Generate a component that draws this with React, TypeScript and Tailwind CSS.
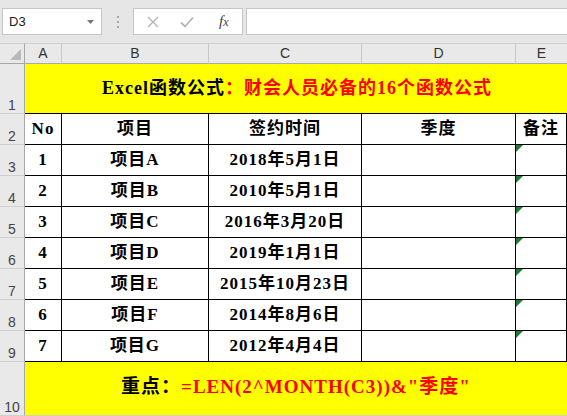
import React from 'react';

const serif = "font-['Liberation_Serif','Noto_Sans_CJK_SC',serif]";

const rows = [
  { no: '1', item: '项目A', date: '2018年5月1日' },
  { no: '2', item: '项目B', date: '2010年5月1日' },
  { no: '3', item: '项目C', date: '2016年3月20日' },
  { no: '4', item: '项目D', date: '2019年1月1日' },
  { no: '5', item: '项目E', date: '2015年10月23日' },
  { no: '6', item: '项目F', date: '2014年8月6日' },
  { no: '7', item: '项目G', date: '2012年4月4日' },
];

const RowHead: React.FC<{ n: string }> = ({ n }) => (
  <div className="flex items-end justify-center pb-[1px] bg-[#e9e9e9] border-r border-r-[#a8a8a8] border-b border-b-[#cfcfcf] text-[14px] leading-none text-[#444] font-['Liberation_Sans',sans-serif]">
    {n}
  </div>
);

const Cell: React.FC<{ children?: React.ReactNode; tri?: boolean }> = ({ children, tri }) => (
  <div className={`relative flex items-center justify-center border-r border-b border-black text-[17px] font-bold tracking-[1px] text-black whitespace-nowrap ${serif}`}>
    {tri && (
      <svg className="absolute left-0 top-0" width="7" height="7" viewBox="0 0 7 7">
        <polygon points="0,0 7,0 0,7" fill="#1e7a34" />
      </svg>
    )}
    {children}
  </div>
);

export default function App() {
  return (
    <div className="w-[567px] h-[416px] overflow-hidden bg-white">
      {/* formula bar */}
      <div className="flex items-start h-[43px] bg-[#e6e6e6] pt-[8px] pl-[2px]">
        <div className="relative flex items-center w-[100px] h-[27px] bg-white border border-[#c6c6c6] pl-[6px] text-[13px] text-[#222] font-['Liberation_Sans',sans-serif]">
          D3
          <svg className="absolute right-[7px] top-[11px]" width="7" height="4" viewBox="0 0 7 4">
            <polygon points="0,0 7,0 3.5,4" fill="#777" />
          </svg>
        </div>
        <div className="flex flex-col items-center justify-center gap-[3px] w-[31px] h-[27px]">
          <span className="w-[2px] h-[2px] bg-[#a8a8a8]" />
          <span className="w-[2px] h-[2px] bg-[#a8a8a8]" />
          <span className="w-[2px] h-[2px] bg-[#a8a8a8]" />
        </div>
        <div className="flex items-center w-[110px] h-[27px] bg-white border border-[#c6c6c6]">
          <svg className="ml-[13px]" width="12" height="12" viewBox="0 0 12 12">
            <path d="M1 1 L11 11 M11 1 L1 11" stroke="#b4b4b4" strokeWidth="1.4" fill="none" />
          </svg>
          <svg className="ml-[21px]" width="14" height="12" viewBox="0 0 14 12">
            <path d="M1 6.5 L5 10.5 L13 1.5" stroke="#b4b4b4" strokeWidth="1.8" fill="none" />
          </svg>
          <span className="ml-[25px] text-[15px] italic text-[#444] font-['Liberation_Serif',serif]">
            f<span className="text-[12px]">x</span>
          </span>
        </div>
        <div className="flex-1 h-[27px] ml-[3px] bg-white border border-[#c6c6c6] border-r-0" />
      </div>

      {/* sheet grid */}
      <div className="grid grid-cols-[25px_37px_147px_153px_154px_51px] grid-rows-[21px_50px_repeat(8,31px)_54px]">
        {/* column headers */}
        <div className="relative bg-[#e9e9e9] border-t border-t-[#d0d0d0] border-r border-r-[#a8a8a8] border-b border-b-[#a8a8a8]">
          <svg className="absolute right-[3px] bottom-[3px]" width="11" height="11" viewBox="0 0 11 11">
            <polygon points="11,0 11,11 0,11" fill="#b8b8b8" />
          </svg>
        </div>
        {['A', 'B', 'C', 'D', 'E'].map((c, i) => (
          <div
            key={c}
            className={`flex items-center justify-center bg-[#e9e9e9] border-t border-t-[#d0d0d0] border-b border-b-[#a8a8a8] ${i < 4 ? 'border-r border-r-[#c8c8c8]' : ''} text-[14px] text-[#333] font-['Liberation_Sans',sans-serif]`}
          >
            {c}
          </div>
        ))}

        {/* row 1 */}
        <RowHead n="1" />
        <div className={`col-span-5 flex items-center justify-center bg-[#ffff00] border-b border-black text-[18px] font-bold tracking-[1px] whitespace-nowrap pl-[2px] ${serif}`}>
          <span className="text-black">Excel函数公式</span>
          <span className="text-[#ff0000]">：财会人员必备的16个函数公式</span>
        </div>

        {/* row 2 */}
        <RowHead n="2" />
        <Cell>No</Cell>
        <Cell>项目</Cell>
        <Cell>签约时间</Cell>
        <Cell>季度</Cell>
        <Cell>备注</Cell>

        {rows.map((r, i) => (
          <React.Fragment key={r.no}>
            <RowHead n={String(i + 3)} />
            <Cell>{r.no}</Cell>
            <Cell>{r.item}</Cell>
            <Cell>{r.date}</Cell>
            <Cell />
            <Cell tri />
          </React.Fragment>
        ))}

        {/* row 10 */}
        <RowHead n="10" />
        <div className={`col-span-5 flex items-center justify-center bg-[#ffff00] border-b border-b-[#d0d0d0] text-[19px] font-bold tracking-[1px] whitespace-nowrap pb-[2px] ${serif}`}>
          <span className="text-black">重点：</span>
          <span className="text-[#ff0000]">=LEN(2^MONTH(C3))&amp;"季度"</span>
        </div>
      </div>
    </div>
  );
}
